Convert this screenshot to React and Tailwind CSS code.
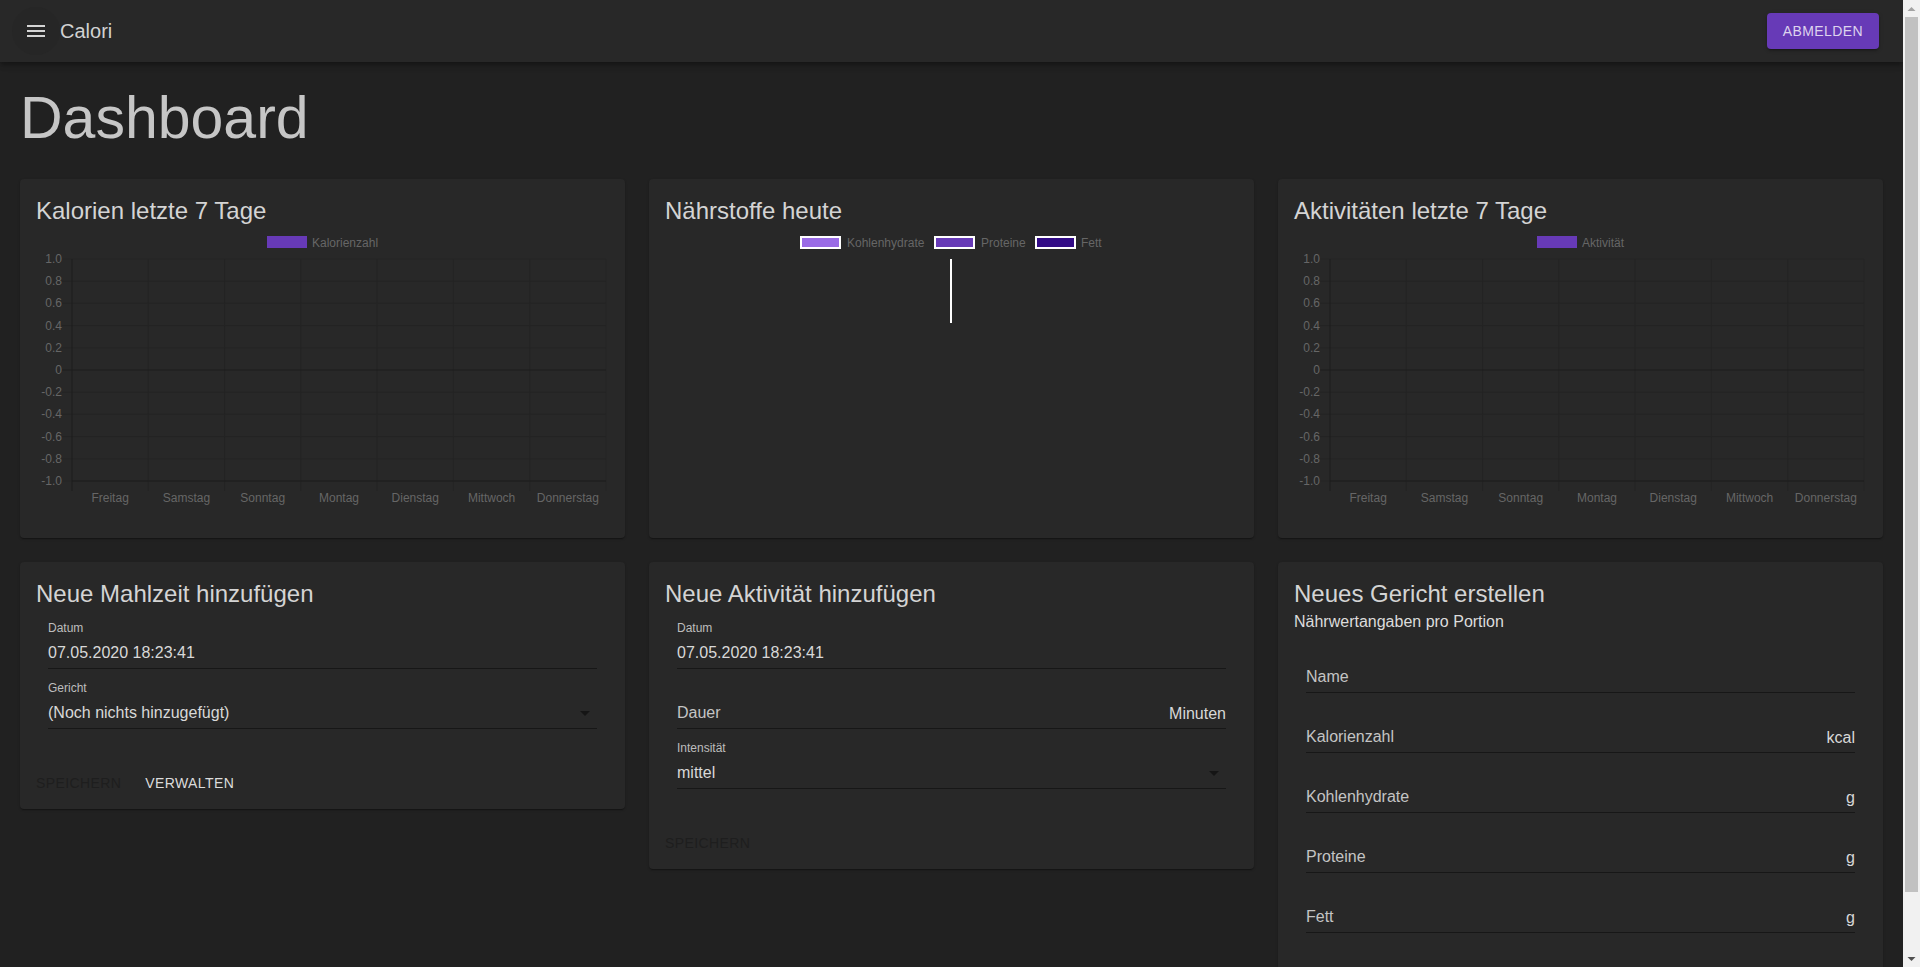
import React from "react";

const days = ["Freitag", "Samstag", "Sonntag", "Montag", "Dienstag", "Mittwoch", "Donnerstag"];
const yTicks = ["1.0", "0.8", "0.6", "0.4", "0.2", "0", "-0.2", "-0.4", "-0.6", "-0.8", "-1.0"];

function LineChart({ legend, legendX }) {
  const left = 36;
  const right = 570;
  const top = 32;
  const step = 22.2;
  const bottom = top + step * 10;
  const colW = (right - left) / 7;
  return (
    <svg width="573" height="287" viewBox="0 0 573 287" className="block" style={{ fontFamily: "'Liberation Sans', Arial, sans-serif" }}>
      <rect x={legendX} y="9" width="40" height="12" fill="#673ab7" />
      <text x={legendX + 45} y="19.5" fontSize="12" fill="#666">{legend}</text>
      {days.map((d, i) => {
        const x = left + colW * (i + 1);
        return <line key={"v" + i} x1={x} x2={x} y1={top} y2={bottom + 10} stroke="#242424" strokeWidth="1" />;
      })}
      {yTicks.map((t, i) => {
        const y = top + step * i;
        const isZero = t === "0";
        return (
          <g key={"h" + i}>
            <line x1={left - 10} x2={right} y1={y} y2={y} stroke={isZero ? "#1c1c1c" : "#242424"} strokeWidth="1" />
            <text x={left - 10} y={y + 4} fontSize="12" fill="#666" textAnchor="end">{t}</text>
          </g>
        );
      })}
      <line x1={left} x2={left} y1={top} y2={bottom + 10} stroke="#1c1c1c" strokeWidth="1" />
      <line x1={left} x2={right} y1={bottom} y2={bottom} stroke="#1c1c1c" strokeWidth="1" />
      {days.map((d, i) => (
        <text key={"x" + i} x={left + colW * i + colW / 2} y="275" fontSize="12" fill="#666" textAnchor="middle">{d}</text>
      ))}
    </svg>
  );
}

function PieChart() {
  const items = [
    { label: "Kohlenhydrate", color: "#9a6be6", x: 135, tx: 182 },
    { label: "Proteine", color: "#673ab7", x: 269, tx: 316 },
    { label: "Fett", color: "#320b86", x: 370, tx: 416 },
  ];
  return (
    <svg width="573" height="287" viewBox="0 0 573 287" className="block" style={{ fontFamily: "'Liberation Sans', Arial, sans-serif" }}>
      {items.map((it) => (
        <g key={it.label}>
          <rect x={it.x + 1} y="10" width="39" height="11" fill={it.color} stroke="#ffffff" strokeWidth="2" />
          <text x={it.tx} y="19.5" fontSize="12" fill="#666">{it.label}</text>
        </g>
      ))}
      <line x1="286" x2="286" y1="32" y2="96" stroke="#ffffff" strokeWidth="2" />
    </svg>
  );
}

function Card({ children }) {
  return (
    <div className="bg-[#282828] rounded shadow-[0_2px_1px_-1px_rgba(0,0,0,0.2),0_1px_1px_0_rgba(0,0,0,0.14),0_1px_3px_0_rgba(0,0,0,0.12)]">
      {children}
    </div>
  );
}

function CardTitle({ children }) {
  return <h2 className="text-[24px] leading-[32px] text-[#d4d4d4]">{children}</h2>;
}

function ArrowDrop() {
  return (
    <svg width="24" height="24" viewBox="0 0 24 24" className="shrink-0 -my-[2px]">
      <path d="M7 10l5 5 5-5z" fill="#151515" />
    </svg>
  );
}

function ShrunkField({ label, value, select, first }) {
  return (
    <div className={(first ? "mt-[11px] " : "mt-3 ") + "mx-3 h-12 flex flex-col border-b border-[#171717]"}>
      <span className="text-[12px] leading-[15px] text-[#bdbdbd]">{label}</span>
      <div className="mt-[7px] h-[19px] flex items-center justify-between">
        <span className="text-[16px] leading-[19px] text-[#d8d8d8]">{value}</span>
        {select ? <ArrowDrop /> : null}
      </div>
    </div>
  );
}

function PlainField({ label, unit, first }) {
  return (
    <div className={(first ? "mt-[11px] " : "mt-3 ") + "mx-3 h-12 flex items-start justify-between border-b border-[#171717]"}>
      <span className="mt-[22px] text-[16px] leading-[19px] text-[#c4c4c4]">{label}</span>
      {unit ? <span className="mt-[23px] text-[16px] leading-[19px] text-[#d8d8d8]">{unit}</span> : null}
    </div>
  );
}

function TextButton({ children, disabled }) {
  return (
    <button
      className={
        "h-9 min-w-16 px-2 rounded text-[14px] uppercase tracking-[0.4px] " +
        (disabled ? "text-[#1e1e1e]" : "text-[#dcdcdc]")
      }
    >
      {children}
    </button>
  );
}

function ScrollBar() {
  return (
    <div className="w-[17px] shrink-0 h-screen bg-[#f1f1f1] flex flex-col">
      <div className="h-[17px] flex items-center justify-center">
        <svg width="9" height="6" viewBox="0 0 9 6">
          <path d="M0.5 5 L4.5 1 L8.5 5 Z" fill="#a3a3a3" />
        </svg>
      </div>
      <div className="mx-[2px] h-[875px] bg-[#c1c1c1]" />
      <div className="flex-1" />
      <div className="h-[17px] flex items-center justify-center">
        <svg width="9" height="6" viewBox="0 0 9 6">
          <path d="M0.5 1 L4.5 5 L8.5 1 Z" fill="#505050" />
        </svg>
      </div>
    </div>
  );
}

export default function App() {
  return (
    <div className="flex h-screen overflow-hidden bg-[#212121] font-['Liberation_Sans',Arial,sans-serif]">
      <div className="flex-1 min-w-0 h-screen overflow-hidden">
        <header className="relative z-10 h-[62px] bg-[#282828] px-6 flex items-center shadow-[0_2px_4px_-1px_rgba(0,0,0,0.2),0_4px_5px_0_rgba(0,0,0,0.14),0_1px_10px_0_rgba(0,0,0,0.12)]">
          <button className="-ml-3 w-12 h-12 rounded-full bg-[#262626] flex items-center justify-center">
            <svg width="24" height="24" viewBox="0 0 24 24">
              <path d="M3 18h18v-2H3v2zm0-5h18v-2H3v2zm0-7v2h18V6H3z" fill="#d4d4d4" />
            </svg>
          </button>
          <span className="text-[20px] leading-[32px] text-[#d2d2d2]">Calori</span>
          <button className="ml-auto h-9 px-4 rounded bg-[#673ab7] text-[14px] uppercase tracking-[0.4px] text-[#ddd3ee] shadow-[0_3px_1px_-2px_rgba(0,0,0,0.2),0_2px_2px_0_rgba(0,0,0,0.14),0_1px_5px_0_rgba(0,0,0,0.12)]">
            Abmelden
          </button>
        </header>

        <main className="px-5 pb-5">
          <h1 className="mt-[21px] text-[59px] leading-[70px] text-[#c6c6c6]">Dashboard</h1>

          <div className="mt-[26px] grid grid-cols-3 gap-6 items-start">
            <Card>
              <div className="px-4 pt-4 pb-6">
                <CardTitle>Kalorien letzte 7 Tage</CardTitle>
                <LineChart legend="Kalorienzahl" legendX={231} />
              </div>
            </Card>
            <Card>
              <div className="px-4 pt-4 pb-6">
                <CardTitle>Nährstoffe heute</CardTitle>
                <PieChart />
              </div>
            </Card>
            <Card>
              <div className="px-4 pt-4 pb-6">
                <CardTitle>Aktivitäten letzte 7 Tage</CardTitle>
                <LineChart legend="Aktivität" legendX={243} />
              </div>
            </Card>

            <Card>
              <div className="px-4 pt-4 pb-7">
                <CardTitle>Neue Mahlzeit hinzufügen</CardTitle>
                <ShrunkField first label="Datum" value="07.05.2020 18:23:41" />
                <ShrunkField label="Gericht" value="(Noch nichts hinzugefügt)" select />
              </div>
              <div className="p-2 flex gap-2">
                <TextButton disabled>Speichern</TextButton>
                <TextButton>Verwalten</TextButton>
              </div>
            </Card>

            <Card>
              <div className="px-4 pt-4 pb-7">
                <CardTitle>Neue Aktivität hinzufügen</CardTitle>
                <ShrunkField first label="Datum" value="07.05.2020 18:23:41" />
                <PlainField label="Dauer" unit="Minuten" />
                <ShrunkField label="Intensität" value="mittel" select />
              </div>
              <div className="p-2 flex gap-2">
                <TextButton disabled>Speichern</TextButton>
              </div>
            </Card>

            <Card>
              <div className="px-4 pt-4 pb-7">
                <CardTitle>Neues Gericht erstellen</CardTitle>
                <p className="text-[16px] leading-[24px] text-[#dcdcdc]">Nährwertangaben pro Portion</p>
                <PlainField first label="Name" />
                <PlainField label="Kalorienzahl" unit="kcal" />
                <PlainField label="Kohlenhydrate" unit="g" />
                <PlainField label="Proteine" unit="g" />
                <PlainField label="Fett" unit="g" />
              </div>
              <div className="h-[52px]" />
            </Card>
          </div>
        </main>
      </div>
      <ScrollBar />
    </div>
  );
}
